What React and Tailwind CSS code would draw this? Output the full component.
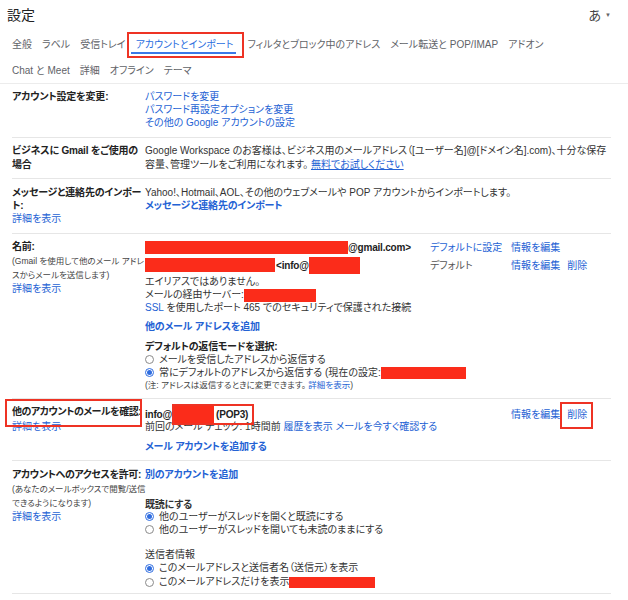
import React from 'react';

const LINK = 'text-[#2462d4]';
const BOLD = 'font-bold text-[#222] tracking-[-0.2px]';

const Radio = ({ checked }) => (
  <span
    className={
      'inline-flex items-center justify-center w-[9px] h-[9px] rounded-full border shrink-0 mr-[5px] ' +
      (checked ? 'border-[#2f6de0]' : 'border-[#8a8a8a]')
    }
  >
    {checked && <span className="w-[5px] h-[5px] rounded-full bg-[#2f6de0]" />}
  </span>
);

const Redact = ({ className }) => <span className={'inline-block bg-[#fb2c1a] ' + className} />;

const Section = ({ label, children, className = '' }) => (
  <div className={'grid grid-cols-[133px_1fr] border-b border-[#e6e6e6] ' + className}>
    {label}
    <div>{children}</div>
  </div>
);

const App = () => {
  const tabs1 = ['全般', 'ラベル', '受信トレイ', 'アカウントとインポート', 'フィルタとブロック中のアドレス', 'メール転送と POP/IMAP', 'アドオン'];
  const tabs2 = ['Chat と Meet', '詳細', 'オフライン', 'テーマ'];

  return (
    <div className="w-[628px] h-[600px] overflow-hidden bg-white text-[10px] text-[#333] font-['Liberation_Sans','Noto_Sans_CJK_JP',sans-serif] [font-feature-settings:'palt']">
      {/* header */}
      <div className="flex justify-between items-center h-[30px] pl-[7px] pr-[17px] pt-[1px]">
        <div className="text-[14px] text-[#222]">設定</div>
        <div className="flex items-center gap-[4px] text-[13px] text-[#444]">
          あ<span className="text-[6px] text-[#666]">▼</span>
        </div>
      </div>

      {/* tabs */}
      <div className="flex gap-[10px] pl-3 mt-[8px] h-[13px] leading-[13px] text-[#5f6368]">
        {tabs1.map((t) =>
          t === 'アカウントとインポート' ? (
            <span key={t} className="relative text-[#2a6ee0] mr-[4px]">
              {t}
              <span className="absolute left-[-5px] right-[-3px] bottom-[-3px] h-[2px] bg-[#3b78e7]" />
              <span className="absolute left-[-9px] right-[-11px] top-[-6px] bottom-[-7px] border-2 border-[#ee3324]" />
            </span>
          ) : (
            <span key={t} className="whitespace-nowrap">{t}</span>
          )
        )}
      </div>
      <div className="flex gap-[10px] pl-3 mt-[13px] h-[13px] leading-[13px] text-[#5f6368]">
        {tabs2.map((t) => (
          <span key={t}>{t}</span>
        ))}
      </div>
      <div className="mt-[6px] border-b border-[#ececec]" />

      <div className="pl-3 pr-[17px] leading-[13px]">
        {/* account settings */}
        <Section className="pt-[6px] pb-[8px]" label={<div className={BOLD}>アカウント設定を変更:</div>}>
          <div className={LINK}>パスワードを変更</div>
          <div className={LINK}>パスワード再設定オプションを変更</div>
          <div className={LINK}>その他の Google アカウントの設定</div>
        </Section>

        {/* business */}
        <Section
          className="pt-[6px] pb-[6px] leading-[14px]"
          label={
            <div className={BOLD}>
              ビジネスに Gmail をご使用の
              <br />
              場合
            </div>
          }
        >
          <div className="whitespace-nowrap">Google Workspace のお客様は、ビジネス用のメールアドレス（[ユーザー名]@[ドメイン名].com)、十分な保存</div>
          <div className="whitespace-nowrap">
            容量、管理ツールをご利用になれます。 <span className={LINK + ' underline'}>無料でお試しください</span>
          </div>
        </Section>

        {/* import */}
        <Section
          className="pt-[7px] pb-[8px]"
          label={
            <div>
              <div className={BOLD + ' whitespace-nowrap'}>メッセージと連絡先のインポー</div>
              <div className={BOLD}>ト:</div>
              <div className={LINK}>詳細を表示</div>
            </div>
          }
        >
          <div className="whitespace-nowrap">Yahoo!、Hotmail、AOL、その他のウェブメールや POP アカウントからインポートします。</div>
          <div className={LINK + ' font-bold tracking-[-0.2px]'}>メッセージと連絡先のインポート</div>
        </Section>

        {/* send as */}
        <Section
          className="pt-[6px] pb-[6px]"
          label={
            <div>
              <div className={BOLD + ' h-[14px] leading-[14px]'}>名前:</div>
              <div className="text-[8.5px] leading-[14px] text-[#444] whitespace-nowrap">
                (Gmail を使用して他のメール アドレ
                <br />
                スからメールを送信します)
              </div>
              <div className={LINK + ' leading-[14px]'}>詳細を表示</div>
            </div>
          }
        >
          <div className="grid grid-cols-[285px_81px_auto] h-[14px] items-center">
            <div className="flex items-center">
              <Redact className="w-[203px] h-[13px]" />
              <span className={BOLD}>@gmail.com&gt;</span>
            </div>
            <span className={LINK}>デフォルトに設定</span>
            <span className={LINK}>情報を編集</span>
          </div>
          <div className="grid grid-cols-[285px_81px_auto] h-[22px] items-center">
            <div className="flex items-center">
              <Redact className="w-[130px] h-[14px]" />
              <span className={BOLD + ' ml-[1px]'}>&lt;info@</span>
              <Redact className="w-[51px] h-[17px]" />
            </div>
            <span className="text-[#555]">デフォルト</span>
            <div className="flex gap-[7px]">
              <span className={LINK}>情報を編集</span>
              <span className={LINK}>削除</span>
            </div>
          </div>
          <div className="leading-[12.5px]">エイリアスではありません。</div>
          <div className="leading-[12.5px] flex items-center">
            メールの経由サーバー:
            <Redact className="w-[72px] h-[13px]" />
          </div>
          <div className="leading-[12.5px]">
            <span className={LINK}>SSL</span> を使用したポート 465 でのセキュリティで保護された接続
          </div>
          <div className={LINK + ' font-bold tracking-[-0.2px] mt-[6px]'}>他のメール アドレスを追加</div>
          <div className={BOLD + ' mt-[7px]'}>デフォルトの返信モードを選択:</div>
          <div className="flex items-center">
            <Radio />
            メールを受信したアドレスから返信する
          </div>
          <div className="flex items-center">
            <Radio checked />
            常にデフォルトのアドレスから返信する (現在の設定:
            <Redact className="w-[85px] h-[12px]" />
          </div>
          <div className="text-[8.5px] text-[#444]">
            (注: アドレスは返信するときに変更できます。 <span className={LINK}>詳細を表示</span>)
          </div>
        </Section>

        {/* check mail */}
        <Section
          className="pt-[5px] pb-[7px]"
          label={
            <div>
              <div className={BOLD + ' relative whitespace-nowrap h-[16px] leading-[16px] tracking-[-0.5px]'}>
                他のアカウントのメールを確認:
                <span className="absolute left-[-7px] w-[137px] top-[-5px] h-[28px] border-2 border-[#ee3324]" />
              </div>
              <div className={LINK + ' leading-[13px]'}>詳細を表示</div>
            </div>
          }
        >
          <div className="grid grid-cols-[366px_auto] h-[16px] items-center">
            <div className={BOLD + ' flex items-center'}>
              info@
              <span className="relative flex items-center">
                <Redact className="w-[42px] h-[21px]" />
                <span className="ml-[2px]">(POP3)</span>
                <span className="absolute left-0 right-[-6px] top-0 bottom-0 border-2 border-[#ee3324]" />
              </span>
            </div>
            <div className="flex gap-[7px] leading-[13px]">
              <span className={LINK}>情報を編集</span>
              <span className="relative inline-block">
                <span className={LINK}>削除</span>
                <span className="absolute left-[-7px] right-[-6px] top-[-6px] bottom-[-8px] border-2 border-[#ee3324]" />
              </span>
            </div>
          </div>
          <div className="whitespace-nowrap">
            前回のメール チェック: 1時間前 <span className={LINK}>履歴を表示</span> <span className={LINK}>メールを今すぐ確認する</span>
          </div>
          <div className={LINK + ' font-bold tracking-[-0.2px] mt-[7px]'}>メール アカウントを追加する</div>
        </Section>

        {/* grant access */}
        <Section
          className="pt-[7px] pb-[4px]"
          label={
            <div>
              <div className={BOLD + ' whitespace-nowrap h-[14px] leading-[14px] tracking-[-0.4px]'}>アカウントへのアクセスを許可:</div>
              <div className="text-[8.5px] leading-[14px] text-[#444] whitespace-nowrap">
                (あなたのメールボックスで閲覧/送信
                <br />
                できるようになります)
              </div>
              <div className={LINK + ' leading-[13px]'}>詳細を表示</div>
            </div>
          }
        >
          <div className={LINK + ' font-bold tracking-[-0.2px]'}>別のアカウントを追加</div>
          <div className="font-bold text-[#333] tracking-[-0.2px] mt-[18px] leading-[11px]">既読にする</div>
          <div className="flex items-center">
            <Radio checked />
            他のユーザーがスレッドを開くと既読にする
          </div>
          <div className="flex items-center">
            <Radio />
            他のユーザーがスレッドを開いても未読のままにする
          </div>
          <div className="text-[#333] mt-[12px]">送信者情報</div>
          <div className="flex items-center leading-[14px]">
            <Radio checked />
            このメールアドレスと送信者名（送信元）を表示
          </div>
          <div className="flex items-center leading-[14px]">
            <Radio />
            このメールアドレスだけを表示
            <Redact className="w-[86px] h-[11px]" />
          </div>
        </Section>
      </div>
    </div>
  );
};

export default App;
